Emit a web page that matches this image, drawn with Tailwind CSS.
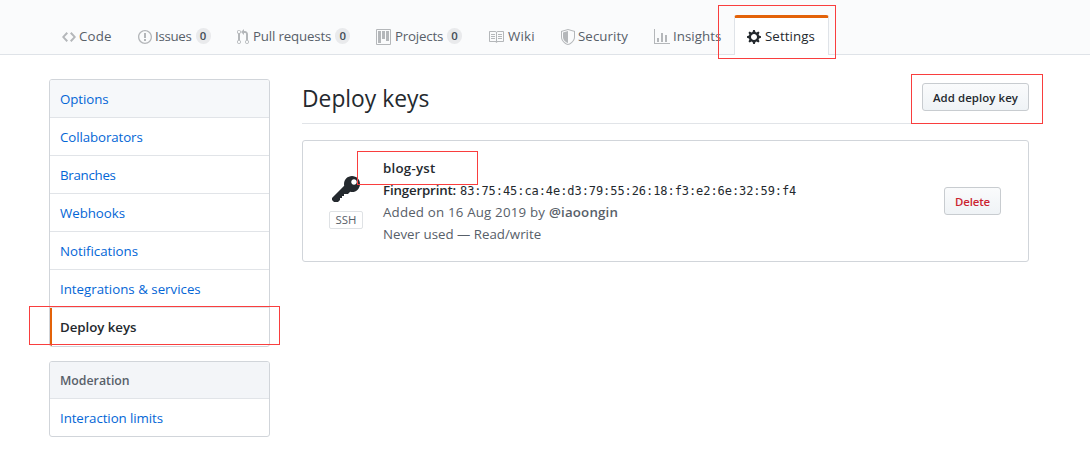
<!DOCTYPE html>
<html lang="en">
<head>
<meta charset="utf-8">
<title>Deploy keys</title>
<script src="https://cdn.jsdelivr.net/npm/@tailwindcss/browser@4"></script>
</head>
<body class="bg-white">
<div class="relative w-[1090px] h-[452px] overflow-hidden font-['Open_Sans',sans-serif] text-[13.3px] leading-[22px] text-[#586069] whitespace-nowrap">
  <header class="h-[55px] bg-[#fafbfc] border-b border-[#dfe3e8]">
    <nav class="flex h-[55px] pl-[62px] pt-[15px]">
      <a class="flex items-center h-[43px] w-[76px] gap-[3px]">
        <svg class="w-[14px] h-4 fill-[#b4b7ba] shrink-0" viewBox="0 0 14 16"><path d="M9.5 3L8 4.5 11.5 8 8 11.5 9.5 13 14 8 9.5 3zm-5 0L0 8l4.5 5L6 11.5 2.5 8 6 4.500 4.500 3z"/></svg>
        <span class="pb-[2px] tracking-[0.15px]">Code</span></a>
      <a class="flex items-center h-[43px] w-[99px] gap-[3px]">
        <svg class="w-[14px] h-4 fill-[#b4b7ba] shrink-0" viewBox="0 0 14 16"><path d="M7 2.300c3.140 0 5.700 2.560 5.700 5.700s-2.560 5.700-5.700 5.700A5.710 5.710 0 011.300 8c0-3.140 2.560-5.700 5.700-5.700zM7 1C3.140 1 0 4.140 0 8s3.140 7 7 7 7-3.140 7-7-3.140-7-7-7zm1 3H6v5h2V4zm0 6H6v2h2v-2z"/></svg>
        <span class="pb-[2px] tracking-[-0.3px]">Issues</span><b class="mb-[2px] ml-[1px] w-[15px] h-4 rounded-full bg-[#e9eaec] text-[11.4px] leading-4 font-semibold text-center text-[#444d56]">0</b></a>
      <a class="flex items-center h-[43px] w-[139px] gap-1">
        <svg class="w-3 h-4 fill-[#b4b7ba] shrink-0" viewBox="0 0 12 16"><path d="M11 11.280V5c-.03-.78-.34-1.470-.94-2.060C9.460 2.350 8.780 2.030 8 2H7V0L4 3l3 3V4h1c.27.02.48.11.69.31.21.2.3.42.31.69v6.280A1.993 1.993 0 0010 15a1.993 1.993 0 001-3.720zm-1 2.920c-.66 0-1.200-.55-1.200-1.200 0-.65.55-1.200 1.200-1.200.65 0 1.200.55 1.200 1.200 0 .65-.55 1.200-1.200 1.200zM4 3c0-1.110-.89-2-2-2a1.993 1.993 0 00-1 3.720v6.560A1.993 1.993 0 002 15a1.993 1.993 0 001-3.720V4.720c.59-.34 1-.98 1-1.720zm-.8 10c0 .66-.55 1.200-1.200 1.200-.65 0-1.200-.55-1.200-1.200 0-.65.55-1.200 1.200-1.200.65 0 1.200.55 1.200 1.200zM2 4.200C1.340 4.200.8 3.650.8 3c0-.65.55-1.200 1.200-1.200.65 0 1.200.55 1.200 1.200 0 .65-.55 1.200-1.200 1.200z"/></svg>
        <span class="pb-[2px] tracking-[-0.17px]">Pull requests</span><b class="mb-[2px] w-[15px] h-4 rounded-full bg-[#e9eaec] text-[11.4px] leading-4 font-semibold text-center text-[#444d56]">0</b></a>
      <a class="flex items-center h-[43px] w-[113px] gap-[4px]">
        <svg class="w-[15px] h-4 fill-[#b4b7ba] shrink-0" viewBox="0 0 15 16"><path fill-rule="evenodd" d="M10 12h3V2h-3v10zm-4-2h3V2H6v8zm-4 4h3V2H2v12zm-1 1h13V1H1v14zM14 0H1a1 1 0 00-1 1v14a1 1 0 001 1h13a1 1 0 001-1V1a1 1 0 00-1-1z"/></svg>
        <span class="pb-[2px] tracking-[-0.2px]">Projects</span><b class="mb-[2px] w-[15px] h-4 rounded-full bg-[#e9eaec] text-[11.4px] leading-4 font-semibold text-center text-[#444d56]">0</b></a>
      <a class="flex items-center h-[43px] w-[72px] gap-[4px] -ml-[1px]">
        <svg class="w-4 h-4 fill-[#b4b7ba] shrink-0" viewBox="0 0 16 16"><path fill-rule="evenodd" d="M3 5h4v1H3V5zm0 3h4V7H3v1zm0 2h4V9H3v1zm11-5h-4v1h4V5zm0 2h-4v1h4V7zm0 2h-4v1h4V9zm2-6v9c0 .55-.45 1-1 1H9.500l-1 1-1-1H2c-.55 0-1-.45-1-1V3c0-.55.45-1 1-1h5.500l1 1 1-1H15c.55 0 1 .45 1 1zm-8 .5L7.500 3H2v9h6V3.500zm7-.5H9.500l-.5.5V12h6V3z"/></svg>
        <span class="pb-[2px] tracking-[0.2px]">Wiki</span></a>
      <a class="flex items-center h-[43px] w-[93px] gap-[3px] pl-[1px]">
        <svg class="w-[14px] h-4 fill-[#b4b7ba] shrink-0" viewBox="0 0 14 16"><path fill-rule="evenodd" d="M0 2l7-2 7 2v6.020C14 12.690 8.690 16 7 16c-1.690 0-7-3.310-7-7.980V2zm1 .75L7 1l6 1.750v5.268C13 12.104 8.449 15 7 15c-1.449 0-6-2.896-6-6.982V2.750zm1 .75L7 2v12c-1.207 0-5-2.482-5-5.985V3.500z"/></svg>
        <span class="pb-[2px] tracking-[0.06px]">Security</span></a>
      <a class="flex items-center h-[43px] w-[81px] gap-[3px] pl-[1px]">
        <svg class="w-4 h-4 fill-[#b4b7ba] shrink-0" viewBox="0 0 16 16"><path d="M16 14v1H0V0h1v14h15zM5 13H3V9h2v4zm4 0H7V4h2v9zm4 0h-2V6h2v7z"/></svg>
        <span class="pb-[2px] tracking-[0.05px]">Insights</span></a>
      <a class="flex w-[95px] h-[40px] bg-white border-t-[3px] border-t-[#e36209] border-x border-x-[#dfe3e8] rounded-t-[3px] pl-3 gap-1 text-[#24292e] items-center">
        <svg class="w-[14px] h-4 fill-[#24292e] shrink-0" viewBox="0 0 14 16"><path fill-rule="evenodd" d="M14 8.770v-1.600l-1.940-.64-.45-1.090.88-1.840-1.130-1.130-1.810.91-1.090-.45-.69-1.920h-1.600l-.63 1.940-1.110.45-1.840-.88-1.130 1.130.91 1.810-.45 1.090L0 7.230v1.590l1.940.64.45 1.090-.88 1.840 1.130 1.130 1.810-.91 1.090.45.69 1.920h1.590l.63-1.940 1.110-.45 1.840.88 1.130-1.130-.92-1.810.47-1.090L14 8.750v.02zM7 11c-1.660 0-3-1.340-3-3s1.340-3 3-3 3 1.340 3 3-1.340 3-3 3z"/></svg>
        <span class="pb-[2px] tracking-[0.08px]">Settings</span></a>
    </nav>
  </header>

  <div class="flex pl-[49px] pt-[24px] gap-8">
    <aside class="w-[221px] text-[#0366d6]">
      <nav class="border border-[#d1d5da] rounded-[3px] overflow-hidden divide-y divide-[#e1e4e8]">
        <a class="block h-[38px] pl-[10px] leading-[38px] bg-[#f6f8fa] tracking-[-0.08px]">Options</a>
        <a class="block h-[38px] pl-[10px] leading-[39px] tracking-[-0.1px]">Collaborators</a>
        <a class="block h-[38px] pl-[10px] leading-[39px] tracking-[-0.28px]">Branches</a>
        <a class="block h-[38px] pl-[10px] leading-[39px] tracking-[-0.04px]">Webhooks</a>
        <a class="block h-[38px] pl-[10px] leading-[39px] tracking-[-0.02px]">Notifications</a>
        <a class="block h-[38px] pl-[10px] leading-[39px]">Integrations &amp; services</a>
        <a class="block h-[38px] pl-2 leading-[39px] border-l-2 border-l-[#e36209] font-semibold text-[#24292e] tracking-[-0.04px]">Deploy keys</a>
      </nav>
      <nav class="mt-[14px] border border-[#d1d5da] rounded-[3px] overflow-hidden divide-y divide-[#e1e4e8]">
        <h3 class="h-[37px] pl-[10px] leading-[37px] bg-[#f3f5f8] font-semibold text-[12.3px] text-[#586069] border-b border-[#e1e4e8]">Moderation</h3>
        <a class="block h-[37px] pl-[10px] leading-[39px] tracking-[-0.08px]">Interaction limits</a>
      </nav>
    </aside>

    <main class="w-[727px]">
      <div class="flex justify-between h-[45px] border-b border-[#e1e4e8]">
        <h2 class="text-[22.8px] leading-[39px] text-[#24292e] tracking-[0.02px]">Deploy keys</h2>
        <button class="mt-1 w-[107px] h-7 rounded-[3px] border border-[#c8ccd0] bg-linear-to-b from-[#fafbfc] to-[#eff3f6] text-[11.4px] leading-[26px] pt-px font-semibold text-[#24292e] tracking-[0.09px]">Add deploy key</button>
      </div>
      <section class="mt-4 flex items-center h-[122px] border border-[#d1d5da] rounded-[3px] pl-[26px] pr-[27px]">
        <div class="w-[34px] mt-[1px]">
          <svg class="ml-[3px] -mt-px w-7 h-8 fill-[#24292e]" viewBox="0 0 14 16"><path fill-rule="evenodd" d="M12.830 2.170C12.080 1.420 11.140 1.030 10 1c-1.130.03-2.080.42-2.830 1.170S6.040 3.860 6.010 5c0 .3.03.59.09.89L0 12v1l1 1h2l1-1v-1h1v-1h1v-1h2l1.090-1.110c.3.08.59.11.91.11 1.140-.03 2.080-.42 2.830-1.170S13.970 6.140 14 5c-.03-1.140-.42-2.080-1.170-2.830zM11 5.380c-.77 0-1.380-.61-1.380-1.380 0-.77.61-1.380 1.380-1.380.77 0 1.380.61 1.380 1.380 0 .77-.61 1.380-1.380 1.380z"/></svg>
          <div class="mt-[5px] h-[18px] border border-[#dfe2e5] rounded-[2px] text-center text-[11.4px] leading-4">SSH</div>
        </div>
        <div class="ml-[20px] flex-1">
          <div class="font-semibold text-[#24292e] tracking-[0.25px]">blog-yst</div>
          <div class="flex h-[22px] text-[#24292e]"><b class="font-semibold w-[77px] tracking-[-0.17px]">Fingerprint:</b><code class="pt-px font-['DejaVu_Sans_Mono',monospace] text-[12px] tracking-[-0.07px]">83:75:45:ca:4e:d3:79:55:26:18:f3:e2:6e:32:59:f4</code></div>
          <div class="flex"><span class="w-[166px] tracking-[0.18px]">Added on 16 Aug 2019 by</span><b class="font-semibold tracking-[0.16px]">@iaoongin</b></div>
          <div>Never used — Read/write</div>
        </div>
        <button class="w-[57px] h-7 rounded-[3px] border border-[#c8ccd0] bg-linear-to-b from-[#fafbfc] to-[#eff3f6] text-[11.4px] leading-[26px] pt-px font-semibold text-[#cb2431] tracking-[-0.12px]">Delete</button>
      </section>
    </main>
  </div>

  <div class="absolute left-[718px] top-[5px] w-[118px] h-[54px] border border-[#f93e3e]"></div>
  <div class="absolute left-[911px] top-[74px] w-[132px] h-[50px] border border-[#f93e3e]"></div>
  <div class="absolute left-[357px] top-[151px] w-[121px] h-[34px] border border-[#f93e3e]"></div>
  <div class="absolute left-[29px] top-[306px] w-[251px] h-[39px] border border-[#f93e3e]"></div>
</div>
</body>
</html>
